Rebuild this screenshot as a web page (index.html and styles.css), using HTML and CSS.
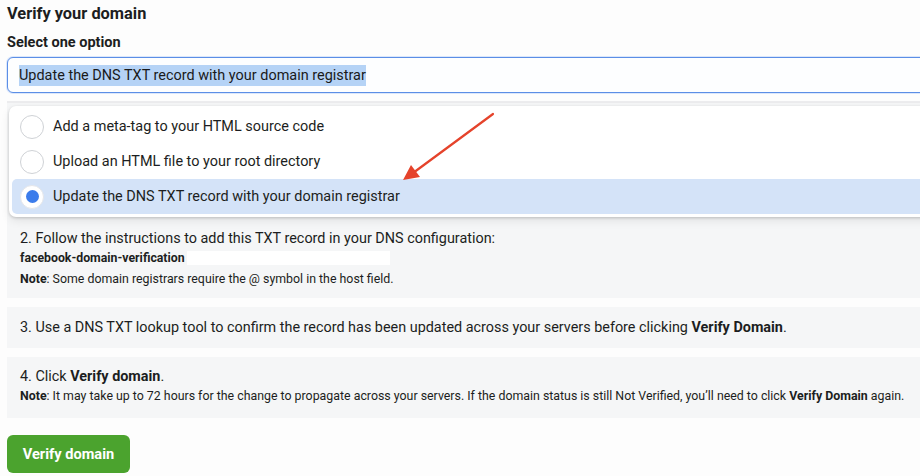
FILE: index.html
```html
<!DOCTYPE html>
<html>
<head>
<meta charset="utf-8">
<link rel="stylesheet" href="styles.css">
</head>
<body>
<div class="page">
  <h1 class="title">Verify your domain</h1>
  <div class="label">Select one option</div>
  <div class="select-wrap">
    <div class="select"><span class="sel-text">Update the DNS TXT record with your domain registrar</span></div>
    <div class="menu">
      <div class="opt"><span class="radio"></span><span>Add a meta-tag to your HTML source code</span></div>
      <div class="opt"><span class="radio"></span><span>Upload an HTML file to your root directory</span></div>
      <div class="opt active"><span class="radio checked"></span><span>Update the DNS TXT record with your domain registrar</span></div>
    </div>
    <svg class="arrow" width="110" height="80" viewBox="0 0 110 80">
      <line x1="104" y1="5" x2="24" y2="64" stroke="#e5432b" stroke-width="2.2" stroke-linecap="round"/>
      <polygon points="14,71 22,56 31,68" fill="#e5432b"/>
    </svg>
  </div>
  <div class="steps">
    <div class="step step-2">
      <div class="main">2. Follow the instructions to add this TXT record in your DNS configuration:</div>
      <div class="record"><b>facebook-domain-verification</b><span class="redact"></span></div>
      <div class="note"><b>Note</b>: Some domain registrars require the @ symbol in the host field.</div>
    </div>
    <div class="step step-3">
      <div class="main">3. Use a DNS TXT lookup tool to confirm the record has been updated across your servers before clicking <b>Verify Domain</b>.</div>
    </div>
    <div class="step step-4">
      <div class="main">4. Click <b>Verify domain</b>.</div>
      <div class="note"><b>Note</b>: It may take up to 72 hours for the change to propagate across your servers. If the domain status is still Not Verified, you’ll need to click <b>Verify Domain</b> again.</div>
    </div>
  </div>
  <button class="btn">Verify domain</button>
</div>
</body>
</html>
```

FILE: styles.css
```css
* { box-sizing: border-box; }
html, body { margin: 0; padding: 0; background: #fdfdfd; overflow: hidden; }
body { font-family: Roboto, "Liberation Sans", Arial, sans-serif; color: #1c1e21; width: 920px; height: 476px; }
.page { padding: 4px 0 0 7px; width: 940px; }
.title { font-size: 16.4px; font-weight: 700; margin: 0; line-height: 20px; }
.label { font-size: 14.5px; font-weight: 700; margin-top: 9px; line-height: 20px; }
.select-wrap { position: relative; margin-top: 4px; }
.select {
  height: 36px; border: 1.5px solid #5b8ee6; border-radius: 6px;
  background: #fdfeff; display: flex; align-items: center; padding-left: 11px;
  font-size: 14.45px; box-shadow: 0 0 0 1px #dbe7fb;
}
.sel-text { background: #b5d3f6; line-height: 21px; color: #1a1a1a; }
.menu {
  position: absolute; left: 2px; top: 49px; width: 930px; z-index: 2;
  background: #fff; border-radius: 7px; padding: 3px;
  box-shadow: 0 1px 3px rgba(0,0,0,0.18), 0 4px 10px rgba(0,0,0,0.08);
}
.opt { height: 35px; display: flex; align-items: center; padding-left: 8px; gap: 9px; font-size: 14.45px; border-radius: 5px; color: #1c1e21; }
.opt.active { background: #d4e3f8; }
.radio { width: 24px; height: 24px; border-radius: 50%; border: 1px solid #cfd2d6; background: #fff; display: flex; align-items: center; justify-content: center; flex: none; }
.radio.checked { border-color: #e4e6ea; }
.radio.checked::after { content: ""; width: 13px; height: 13px; border-radius: 50%; background: #3b7ceb; }
.arrow { position: absolute; left: 382px; top: 52px; z-index: 3; }
.steps { display: flex; flex-direction: column; gap: 9px; margin-top: 8px; }
.step { background: #f5f6f7; padding-left: 13px; }
.step-2 { height: 197px; padding-top: 127px; border-top: 2px solid #ececee; }
.step-3 { height: 41px; display: flex; align-items: center; }
.step-4 { height: 61px; padding-top: 11px; }
.main { font-size: 14.4px; line-height: 18px; }
.record { font-size: 12.3px; line-height: 20px; height: 20px; display: flex; align-items: center; }
.redact { display: inline-block; width: 203px; height: 14px; background: #fff; margin-left: 2px; }
.note { font-size: 12.37px; line-height: 20px; margin-top: 1px; }
.step-4 .note { margin-top: 0; }
.btn {
  margin-top: 17px; width: 123px; height: 38px; border: 0; border-radius: 6px;
  background: #4ba32e; color: #fff; font-family: inherit; font-weight: 700; font-size: 14.6px;
  display: flex; align-items: center; justify-content: center; padding: 0;
}
```
